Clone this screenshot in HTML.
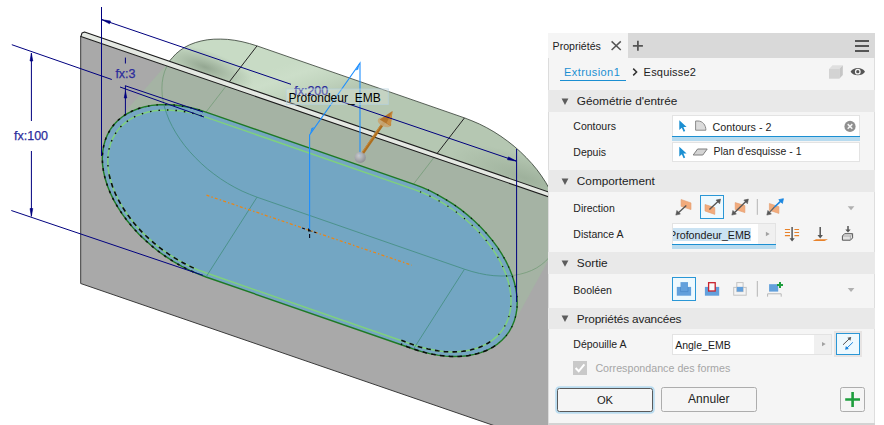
<!DOCTYPE html>
<html lang="fr">
<head>
<meta charset="utf-8">
<title>Propriétés - Extrusion1</title>
<style>
html,body{margin:0;padding:0;background:#fff;}
body{width:884px;height:425px;position:relative;overflow:hidden;font-family:"Liberation Sans",sans-serif;color:#222;}
#scene{position:absolute;left:0;top:0;width:884px;height:425px;}
#scene text{font-family:"Liberation Sans",sans-serif;}
#panel{position:absolute;left:548px;top:33px;width:327px;height:389.8px;background:#f5f5f5;}
#panel .bl{position:absolute;left:0;top:0;width:1px;height:390px;background:#dcdcdc;}
#panel .br{position:absolute;left:326px;top:25px;width:1px;height:365px;background:#dedede;}
#below{position:absolute;left:548px;top:422.6px;width:327px;height:2.4px;background:#d3d3d3;}
.abs{position:absolute;white-space:nowrap;line-height:1;}
.tabbar{position:absolute;left:0;top:0;width:327px;height:24.6px;background:#d9d9d9;}
.tab{position:absolute;left:0;top:0;width:80px;height:25px;background:#f5f5f5;}
.hdr{position:absolute;left:0;width:327px;height:21px;background:#e9e9e9;}
.hdr span{position:absolute;left:28.8px;top:5.1px;font-size:11.8px;line-height:1;color:#222;white-space:nowrap;}
.lbl{position:absolute;left:25.3px;font-size:10.5px;line-height:1;color:#222;white-space:nowrap;}
.inp{position:absolute;background:#fff;box-sizing:border-box;border:1px solid #e3e3e3;}
.uline{position:absolute;height:1.2px;background:#1b8fd2;}
.band{position:absolute;background:#b8dbef;}
.sel{position:absolute;box-sizing:border-box;border:1px solid #2a97d6;background:#eef9fe;}
.btn{position:absolute;box-sizing:border-box;border:1px solid #adadad;border-radius:2.5px;background:#f5f5f5;font-size:12px;line-height:22px;text-align:center;color:#222;}
#icons{position:absolute;left:0;top:0;width:327px;height:389px;overflow:visible;}
</style>
</head>
<body>
<svg id="scene" viewBox="0 0 884 425">
<defs>
  <clipPath id="slotClip"><path d="M413.5 184.1 L421.6 187.2 L429.7 190.7 L437.7 194.8 L445.5 199.3 L453.2 204.2 L460.6 209.4 L467.7 215.1 L474.4 221.0 L480.8 227.2 L486.8 233.7 L492.3 240.4 L497.4 247.2 L501.9 254.2 L505.9 261.2 L509.3 268.3 L512.1 275.3 L514.3 282.3 L515.9 289.2 L516.9 296.0 L517.2 302.6 L516.9 308.9 L515.9 315.0 L514.3 320.8 L512.1 326.3 L509.3 331.4 L505.9 336.1 L501.9 340.3 L497.4 344.1 L492.3 347.5 L486.8 350.3 L480.8 352.6 L474.4 354.4 L467.7 355.7 L460.6 356.4 L453.2 356.5 L445.5 356.1 L437.7 355.1 L429.7 353.6 L421.6 351.6 L413.5 349.0 L206.0 277.0 L197.9 273.9 L189.8 270.4 L181.8 266.3 L174.0 261.8 L166.3 256.9 L158.9 251.7 L151.8 246.0 L145.1 240.1 L138.7 233.9 L132.7 227.4 L127.2 220.7 L122.1 213.9 L117.6 206.9 L113.6 199.9 L110.2 192.8 L107.4 185.8 L105.2 178.8 L103.6 171.9 L102.6 165.1 L102.3 158.6 L102.6 152.2 L103.6 146.1 L105.2 140.3 L107.4 134.8 L110.2 129.7 L113.6 125.0 L117.6 120.8 L122.1 117.0 L127.2 113.6 L132.7 110.8 L138.7 108.5 L145.1 106.7 L151.8 105.4 L158.9 104.7 L166.3 104.6 L174.0 105.0 L181.8 106.0 L189.8 107.5 L197.9 109.5 L206.0 112.1 Z"/></clipPath>
  <clipPath id="plateClip"><polygon points="80.7,36.5 600,214.4 600,462 80.7,283.5"/></clipPath>
  <clipPath id="aboveStrip"><polygon points="0,0 600,0 600,209.7 84,31.8 0,2.8"/></clipPath>
  <linearGradient id="gbody" gradientUnits="userSpaceOnUse" x1="300" y1="106" x2="285.7" y2="64">
    <stop offset="0" stop-color="#b5c7b2"/>
    <stop offset="0.35" stop-color="#c2d5bf"/>
    <stop offset="0.7" stop-color="#ccdec9"/>
    <stop offset="1" stop-color="#c8dbc5"/>
  </linearGradient>
  <radialGradient id="gend" gradientUnits="userSpaceOnUse" cx="525" cy="178" r="30" gradientTransform="translate(525 178) rotate(19) scale(2.6 0.75) translate(-525 -178)">
    <stop offset="0" stop-color="#8fa28d" stop-opacity="0.6"/>
    <stop offset="1" stop-color="#8fa28d" stop-opacity="0"/>
  </radialGradient>
  <radialGradient id="gshadow" gradientUnits="userSpaceOnUse" cx="205" cy="67" r="30" gradientTransform="translate(205 67) rotate(19) scale(1.7 0.55) translate(-205 -67)">
    <stop offset="0" stop-color="#879a85" stop-opacity="0.8"/>
    <stop offset="1" stop-color="#8fa28d" stop-opacity="0"/>
  </radialGradient>
  <radialGradient id="ball" cx="0.4" cy="0.35" r="0.7">
    <stop offset="0" stop-color="#cfcfd4"/>
    <stop offset="1" stop-color="#85858e"/>
  </radialGradient>
</defs>
<!-- extruded body seen behind the plate -->
<g clip-path="url(#aboveStrip)">
  <path d="M102.3 158.6 L102.6 152.2 L103.6 146.1 L105.2 140.3 L107.4 134.8 L110.2 129.7 L113.6 125.0 L172.3 57.8 L175.9 53.9 L180.1 50.4 L184.7 47.3 L189.8 44.7 L195.3 42.6 L201.1 41.0 L207.3 39.8 L213.8 39.2 L220.6 39.1 L227.6 39.4 L234.8 40.3 L242.1 41.7 L249.6 43.6 L257.0 45.9 L464.5 117.9 L471.9 120.8 L479.4 124.0 L486.7 127.7 L493.9 131.8 L500.9 136.3 L507.7 141.2 L514.2 146.3 L520.4 151.8 L526.2 157.5 L531.7 163.4 L536.8 169.5 L541.4 175.8 L545.6 182.2 L549.2 188.6 L552.4 195.1 L554.9 201.6 L557.0 208.0 L558.4 214.3 L559.3 220.5 L559.6 226.6 L559.3 232.4 L558.4 238.0 L557.0 243.3 L554.9 248.3 L512.1 326.3 L509.3 331.4 L505.9 336.1 L501.9 340.3 L497.4 344.1 L492.3 347.5 L486.8 350.3 L480.8 352.6 L474.4 354.4 L467.7 355.7 L460.6 356.4 L453.2 356.5 L445.5 356.1 L437.7 355.1 L429.7 353.6 L421.6 351.6 L413.5 349.0 L206.0 277.0 L197.9 273.9 L189.8 270.4 L181.8 266.3 L174.0 261.8 L166.3 256.9 L158.9 251.7 L151.8 246.0 L145.1 240.1 L138.7 233.9 L132.7 227.4 L127.2 220.7 L122.1 213.9 L117.6 206.9 L113.6 199.9 L110.2 192.8 L107.4 185.8 L105.2 178.8 L103.6 171.9 L102.6 165.1 Z" fill="url(#gbody)"/>
  <path d="M102.3 158.6 L102.6 152.2 L103.6 146.1 L105.2 140.3 L107.4 134.8 L110.2 129.7 L113.6 125.0 L172.3 57.8 L175.9 53.9 L180.1 50.4 L184.7 47.3 L189.8 44.7 L195.3 42.6 L201.1 41.0 L207.3 39.8 L213.8 39.2 L220.6 39.1 L227.6 39.4 L234.8 40.3 L242.1 41.7 L249.6 43.6 L257.0 45.9 L464.5 117.9 L471.9 120.8 L479.4 124.0 L486.7 127.7 L493.9 131.8 L500.9 136.3 L507.7 141.2 L514.2 146.3 L520.4 151.8 L526.2 157.5 L531.7 163.4 L536.8 169.5 L541.4 175.8 L545.6 182.2 L549.2 188.6 L552.4 195.1 L554.9 201.6 L557.0 208.0 L558.4 214.3 L559.3 220.5 L559.6 226.6 L559.3 232.4 L558.4 238.0 L557.0 243.3 L554.9 248.3 L512.1 326.3 L509.3 331.4 L505.9 336.1 L501.9 340.3 L497.4 344.1 L492.3 347.5 L486.8 350.3 L480.8 352.6 L474.4 354.4 L467.7 355.7 L460.6 356.4 L453.2 356.5 L445.5 356.1 L437.7 355.1 L429.7 353.6 L421.6 351.6 L413.5 349.0 L206.0 277.0 L197.9 273.9 L189.8 270.4 L181.8 266.3 L174.0 261.8 L166.3 256.9 L158.9 251.7 L151.8 246.0 L145.1 240.1 L138.7 233.9 L132.7 227.4 L127.2 220.7 L122.1 213.9 L117.6 206.9 L113.6 199.9 L110.2 192.8 L107.4 185.8 L105.2 178.8 L103.6 171.9 L102.6 165.1 Z" fill="url(#gend)"/>
  <path d="M102.3 158.6 L102.6 152.2 L103.6 146.1 L105.2 140.3 L107.4 134.8 L110.2 129.7 L113.6 125.0 L172.3 57.8 L175.9 53.9 L180.1 50.4 L184.7 47.3 L189.8 44.7 L195.3 42.6 L201.1 41.0 L207.3 39.8 L213.8 39.2 L220.6 39.1 L227.6 39.4 L234.8 40.3 L242.1 41.7 L249.6 43.6 L257.0 45.9 L464.5 117.9 L471.9 120.8 L479.4 124.0 L486.7 127.7 L493.9 131.8 L500.9 136.3 L507.7 141.2 L514.2 146.3 L520.4 151.8 L526.2 157.5 L531.7 163.4 L536.8 169.5 L541.4 175.8 L545.6 182.2 L549.2 188.6 L552.4 195.1 L554.9 201.6 L557.0 208.0 L558.4 214.3 L559.3 220.5 L559.6 226.6 L559.3 232.4 L558.4 238.0 L557.0 243.3 L554.9 248.3 L512.1 326.3 L509.3 331.4 L505.9 336.1 L501.9 340.3 L497.4 344.1 L492.3 347.5 L486.8 350.3 L480.8 352.6 L474.4 354.4 L467.7 355.7 L460.6 356.4 L453.2 356.5 L445.5 356.1 L437.7 355.1 L429.7 353.6 L421.6 351.6 L413.5 349.0 L206.0 277.0 L197.9 273.9 L189.8 270.4 L181.8 266.3 L174.0 261.8 L166.3 256.9 L158.9 251.7 L151.8 246.0 L145.1 240.1 L138.7 233.9 L132.7 227.4 L127.2 220.7 L122.1 213.9 L117.6 206.9 L113.6 199.9 L110.2 192.8 L107.4 185.8 L105.2 178.8 L103.6 171.9 L102.6 165.1 Z" fill="url(#gshadow)"/>
  <path d="M102.3 158.6 L102.6 152.2 L103.6 146.1 L105.2 140.3 L107.4 134.8 L110.2 129.7 L113.6 125.0 L172.3 57.8 L175.9 53.9 L180.1 50.4 L184.7 47.3 L189.8 44.7 L195.3 42.6 L201.1 41.0 L207.3 39.8 L213.8 39.2 L220.6 39.1 L227.6 39.4 L234.8 40.3 L242.1 41.7 L249.6 43.6 L257.0 45.9 L464.5 117.9 L471.9 120.8 L479.4 124.0 L486.7 127.7 L493.9 131.8 L500.9 136.3 L507.7 141.2 L514.2 146.3 L520.4 151.8 L526.2 157.5 L531.7 163.4 L536.8 169.5 L541.4 175.8 L545.6 182.2 L549.2 188.6 L552.4 195.1 L554.9 201.6 L557.0 208.0 L558.4 214.3 L559.3 220.5 L559.6 226.6 L559.3 232.4 L558.4 238.0 L557.0 243.3 L554.9 248.3 L512.1 326.3 L509.3 331.4 L505.9 336.1 L501.9 340.3 L497.4 344.1 L492.3 347.5 L486.8 350.3 L480.8 352.6 L474.4 354.4 L467.7 355.7 L460.6 356.4 L453.2 356.5 L445.5 356.1 L437.7 355.1 L429.7 353.6 L421.6 351.6 L413.5 349.0 L206.0 277.0 L197.9 273.9 L189.8 270.4 L181.8 266.3 L174.0 261.8 L166.3 256.9 L158.9 251.7 L151.8 246.0 L145.1 240.1 L138.7 233.9 L132.7 227.4 L127.2 220.7 L122.1 213.9 L117.6 206.9 L113.6 199.9 L110.2 192.8 L107.4 185.8 L105.2 178.8 L103.6 171.9 L102.6 165.1 Z" fill="none" stroke="#3c463c" stroke-width="0.85"/>
  <path d="M257.0 45.9 L206.0 112.1" stroke="#222" stroke-width="1" fill="none"/>
  <path d="M464.5 117.9 L413.5 184.1" stroke="#222" stroke-width="1" fill="none"/>
</g>
<!-- plate front face -->
<polygon points="80.7,36.5 600,214.4 600,462 80.7,283.5" fill="#a9a9a9"/>
<g clip-path="url(#plateClip)">
  <path d="M102.3 158.6 L102.6 152.2 L103.6 146.1 L105.2 140.3 L107.4 134.8 L110.2 129.7 L113.6 125.0 L172.3 57.8 L175.9 53.9 L180.1 50.4 L184.7 47.3 L189.8 44.7 L195.3 42.6 L201.1 41.0 L207.3 39.8 L213.8 39.2 L220.6 39.1 L227.6 39.4 L234.8 40.3 L242.1 41.7 L249.6 43.6 L257.0 45.9 L464.5 117.9 L471.9 120.8 L479.4 124.0 L486.7 127.7 L493.9 131.8 L500.9 136.3 L507.7 141.2 L514.2 146.3 L520.4 151.8 L526.2 157.5 L531.7 163.4 L536.8 169.5 L541.4 175.8 L545.6 182.2 L549.2 188.6 L552.4 195.1 L554.9 201.6 L557.0 208.0 L558.4 214.3 L559.3 220.5 L559.6 226.6 L559.3 232.4 L558.4 238.0 L557.0 243.3 L554.9 248.3 L512.1 326.3 L509.3 331.4 L505.9 336.1 L501.9 340.3 L497.4 344.1 L492.3 347.5 L486.8 350.3 L480.8 352.6 L474.4 354.4 L467.7 355.7 L460.6 356.4 L453.2 356.5 L445.5 356.1 L437.7 355.1 L429.7 353.6 L421.6 351.6 L413.5 349.0 L206.0 277.0 L197.9 273.9 L189.8 270.4 L181.8 266.3 L174.0 261.8 L166.3 256.9 L158.9 251.7 L151.8 246.0 L145.1 240.1 L138.7 233.9 L132.7 227.4 L127.2 220.7 L122.1 213.9 L117.6 206.9 L113.6 199.9 L110.2 192.8 L107.4 185.8 L105.2 178.8 L103.6 171.9 L102.6 165.1 Z" fill="#a5b3a4"/>
  <path d="M257.0 45.9 L206.0 112.1" stroke="#6f9a72" stroke-width="0.7" fill="none"/>
  <path d="M464.5 117.9 L413.5 184.1" stroke="#6f9a72" stroke-width="0.7" fill="none"/>
  <path d="M464.5 117.9 L471.9 120.8 L479.4 124.0 L486.7 127.7 L493.9 131.8 L500.9 136.3 L507.7 141.2 L514.2 146.3 L520.4 151.8 L526.2 157.5 L531.7 163.4 L536.8 169.5 L541.4 175.8 L545.6 182.2 L549.2 188.6 L552.4 195.1 L554.9 201.6 L557.0 208.0 L558.4 214.3 L559.3 220.5 L559.6 226.6 L559.3 232.4 L558.4 238.0 L557.0 243.3 L554.9 248.3 L552.4 253.0 L549.2 257.3 L545.6 261.2 L541.4 264.7 L536.8 267.8 L531.7 270.4 L526.2 272.5 L520.4 274.1 L514.2 275.3 L507.7 275.9 L500.9 276.0 L493.9 275.7 L486.7 274.8 L479.4 273.4 L471.9 271.5 L464.5 269.2 L257.0 197.2 L249.6 194.3 L242.1 191.1 L234.8 187.4 L227.6 183.3 L220.6 178.8 L213.8 173.9 L207.3 168.8 L201.1 163.3 L195.3 157.6 L189.8 151.7 L184.7 145.6 L180.1 139.3 L175.9 132.9 L172.3 126.5 L169.1 120.0 L166.6 113.5 L164.5 107.1 L163.1 100.8 L162.2 94.6 L161.9 88.5 L162.2 82.7 L163.1 77.1 L164.5 71.8 L166.6 66.8 L169.1 62.1 L172.3 57.8 L175.9 53.9 L180.1 50.4 L184.7 47.3 L189.8 44.7 L195.3 42.6 L201.1 41.0 L207.3 39.8 L213.8 39.2 L220.6 39.1 L227.6 39.4 L234.8 40.3 L242.1 41.7 L249.6 43.6 L257.0 45.9 Z" fill="none" stroke="#6f9a72" stroke-width="0.7"/>
</g>
<polyline points="80.7,36 80.7,283.5 600,462" fill="none" stroke="#3a3a3a" stroke-width="1"/>
<!-- plate top strip -->
<polygon points="80.9,36.5 82,33 84.5,32 600,209.7 600,214.4" fill="#e4e8e2" stroke="#1c1c1c" stroke-width="1.05" stroke-linejoin="round"/>
<!-- sketch profile -->
<path d="M413.5 184.1 L421.6 187.2 L429.7 190.7 L437.7 194.8 L445.5 199.3 L453.2 204.2 L460.6 209.4 L467.7 215.1 L474.4 221.0 L480.8 227.2 L486.8 233.7 L492.3 240.4 L497.4 247.2 L501.9 254.2 L505.9 261.2 L509.3 268.3 L512.1 275.3 L514.3 282.3 L515.9 289.2 L516.9 296.0 L517.2 302.6 L516.9 308.9 L515.9 315.0 L514.3 320.8 L512.1 326.3 L509.3 331.4 L505.9 336.1 L501.9 340.3 L497.4 344.1 L492.3 347.5 L486.8 350.3 L480.8 352.6 L474.4 354.4 L467.7 355.7 L460.6 356.4 L453.2 356.5 L445.5 356.1 L437.7 355.1 L429.7 353.6 L421.6 351.6 L413.5 349.0 L206.0 277.0 L197.9 273.9 L189.8 270.4 L181.8 266.3 L174.0 261.8 L166.3 256.9 L158.9 251.7 L151.8 246.0 L145.1 240.1 L138.7 233.9 L132.7 227.4 L127.2 220.7 L122.1 213.9 L117.6 206.9 L113.6 199.9 L110.2 192.8 L107.4 185.8 L105.2 178.8 L103.6 171.9 L102.6 165.1 L102.3 158.6 L102.6 152.2 L103.6 146.1 L105.2 140.3 L107.4 134.8 L110.2 129.7 L113.6 125.0 L117.6 120.8 L122.1 117.0 L127.2 113.6 L132.7 110.8 L138.7 108.5 L145.1 106.7 L151.8 105.4 L158.9 104.7 L166.3 104.6 L174.0 105.0 L181.8 106.0 L189.8 107.5 L197.9 109.5 L206.0 112.1 Z" fill="#76a6c2" stroke="#1f7a25" stroke-width="1.4"/>
<path d="M413.2 189.1 L420.9 192.0 L428.5 195.4 L436.0 199.2 L443.4 203.4 L450.6 208.0 L457.6 213.0 L464.3 218.3 L470.7 224.0 L476.8 229.8 L482.4 235.9 L487.6 242.2 L492.4 248.7 L496.7 255.3 L500.4 261.9 L503.6 268.6 L506.3 275.2 L508.4 281.8 L509.9 288.3 L510.8 294.7 L511.1 300.9 L510.8 306.9 L509.9 312.7 L508.4 318.2 L506.3 323.3 L503.6 328.1 L500.4 332.6 L496.7 336.6 L492.4 340.2 L487.6 343.3 L482.4 346.0 L476.8 348.2 L470.7 349.9 L464.3 351.1 L457.6 351.7 L450.6 351.9 L443.4 351.5 L436.0 350.6 L428.5 349.1 L420.9 347.2 L413.2 344.8 L205.7 272.8 L198.0 269.9 L190.4 266.5 L182.9 262.7 L175.5 258.5 L168.3 253.9 L161.3 248.9 L154.6 243.6 L148.2 237.9 L142.1 232.1 L136.5 226.0 L131.3 219.7 L126.5 213.2 L122.2 206.6 L118.5 200.0 L115.3 193.3 L112.6 186.7 L110.5 180.1 L109.0 173.6 L108.1 167.2 L107.8 161.0 L108.1 155.0 L109.0 149.2 L110.5 143.7 L112.6 138.6 L115.3 133.8 L118.5 129.3 L122.2 125.3 L126.5 121.7 L131.3 118.6 L136.5 115.9 L142.1 113.7 L148.2 112.0 L154.6 110.8 L161.3 110.2 L168.3 110.0 L175.5 110.4 L182.9 111.3 L190.4 112.8 L198.0 114.7 L205.7 117.1 Z" fill="#74a6c3" stroke="#7fd07f" stroke-width="1.5"/>
<g clip-path="url(#slotClip)" fill="none" stroke="#3f8c7c" stroke-width="0.9" opacity="0.85">
  <path d="M464.5 117.9 L471.9 120.8 L479.4 124.0 L486.7 127.7 L493.9 131.8 L500.9 136.3 L507.7 141.2 L514.2 146.3 L520.4 151.8 L526.2 157.5 L531.7 163.4 L536.8 169.5 L541.4 175.8 L545.6 182.2 L549.2 188.6 L552.4 195.1 L554.9 201.6 L557.0 208.0 L558.4 214.3 L559.3 220.5 L559.6 226.6 L559.3 232.4 L558.4 238.0 L557.0 243.3 L554.9 248.3 L552.4 253.0 L549.2 257.3 L545.6 261.2 L541.4 264.7 L536.8 267.8 L531.7 270.4 L526.2 272.5 L520.4 274.1 L514.2 275.3 L507.7 275.9 L500.9 276.0 L493.9 275.7 L486.7 274.8 L479.4 273.4 L471.9 271.5 L464.5 269.2 L257.0 197.2 L249.6 194.3 L242.1 191.1 L234.8 187.4 L227.6 183.3 L220.6 178.8 L213.8 173.9 L207.3 168.8 L201.1 163.3 L195.3 157.6 L189.8 151.7 L184.7 145.6 L180.1 139.3 L175.9 132.9 L172.3 126.5 L169.1 120.0 L166.6 113.5 L164.5 107.1 L163.1 100.8 L162.2 94.6 L161.9 88.5 L162.2 82.7 L163.1 77.1 L164.5 71.8 L166.6 66.8 L169.1 62.1 L172.3 57.8 L175.9 53.9 L180.1 50.4 L184.7 47.3 L189.8 44.7 L195.3 42.6 L201.1 41.0 L207.3 39.8 L213.8 39.2 L220.6 39.1 L227.6 39.4 L234.8 40.3 L242.1 41.7 L249.6 43.6 L257.0 45.9 Z"/>
  <path d="M257.0 197.2 L206.0 277.0"/>
  <path d="M464.5 269.2 L413.5 349.0"/>
</g>
<g fill="none" stroke="#0c0c0c" stroke-width="1.5" stroke-dasharray="2.6 5.2">
  <path d="M193.4 272.0 L185.3 268.2 L177.4 263.9 L169.7 259.2 L162.2 254.1 L154.9 248.6 L148.0 242.8 L141.5 236.7 L135.3 230.3 L129.6 223.7 L124.3 216.9 L119.5 210.0 L115.3 203.0 L111.6 196.0 L108.6 188.9 L106.1 181.9 L104.2 174.9 L103.0 168.1 L102.4 161.4 L102.4 155.0 L103.1 148.8 L104.4 142.8 L106.3 137.2 L108.9 132.0 L112.0 127.1 L115.7 122.6 L120.0 118.6 L124.8 115.0 L130.2 112.0 L135.9 109.4 L142.2 107.4"/>
</g>
<g fill="none" stroke="#0c0c0c" stroke-width="1.6" stroke-dasharray="4.8 4.2">
  <path d="M193.8 268.1 L189.6 266.1 L185.4 264.0 L181.2 261.8 L177.1 259.4 L173.0 257.0 L169.0 254.4 L165.1 251.7 L161.3 248.9 L157.5 246.0 L153.8 242.9 L150.3 239.8 L146.8 236.7 L143.4 233.4 L140.2 230.1 L137.1 226.6 L134.1 223.2 L131.3 219.7 L128.6 216.1 L126.0 212.5 L123.6 208.8 L121.4 205.2 L119.3 201.5 L117.3 197.8 L115.6 194.1 L114.0 190.4 L112.6 186.7 L111.4 183.0 L110.3 179.3 L109.4 175.7 L108.8 172.1"/>
</g>
<g fill="none" stroke="#0c0c0c" stroke-width="1.6" stroke-dasharray="4.6 4.2">
  <path d="M495.2 345.7 L493.0 347.1 L490.6 348.4 L488.2 349.7 L485.7 350.8 L483.1 351.8 L480.4 352.8 L477.7 353.6 L474.8 354.3 L471.9 354.9 L469.0 355.5 L465.9 355.9 L462.8 356.2 L459.6 356.4 L456.4 356.5 L453.2 356.5 L449.9 356.4 L446.5 356.2 L443.1 355.8 L439.7 355.4 L436.2 354.9 L432.7 354.3 L429.2 353.5 L425.7 352.7 L422.2 351.7 L418.6 350.7 L415.0 349.5 L411.5 348.3 L407.9 347.0 L404.4 345.5 L400.8 344.0"/>
  <path d="M490.3 341.6 L488.2 343.0 L486.0 344.2 L483.7 345.4 L481.4 346.5 L478.9 347.5 L476.4 348.3 L473.8 349.1 L471.1 349.8 L468.4 350.4 L465.5 350.9 L462.7 351.3 L459.7 351.6 L456.8 351.8 L453.7 351.9 L450.6 351.9 L447.5 351.8 L444.4 351.6 L441.1 351.2 L437.9 350.8 L434.6 350.3 L431.4 349.7 L428.0 349.0 L424.7 348.2 L421.4 347.4 L418.0 346.4 L414.7 345.3 L411.3 344.1 L407.9 342.9 L404.6 341.5 L401.2 340.1"/>
</g>
<g fill="none" stroke="#0c0c0c" stroke-width="1.4" stroke-dasharray="1.5 7">
  <path d="M108.0 166.5 L107.8 162.2 L107.9 158.1 L108.2 154.1 L108.8 150.1 L109.7 146.3 L110.9 142.7 L112.3 139.2 L114.0 135.8 L116.0 132.6 L118.2 129.6 L120.7 126.8 L123.4 124.2 L126.4 121.8 L129.6 119.6 L133.0 117.6 L136.6 115.8 L140.4 114.3 L144.4 113.0 L148.5 111.9 L152.9 111.1 L157.4 110.5 L162.0 110.1 L166.7 110.0 L171.6 110.2 L176.6 110.5 L181.6 111.1 L186.7 112.0 L191.9 113.1 L197.1 114.4 L202.3 116.0"/>
  <path d="M148.0 106.1 L149.7 105.8 L151.5 105.5 L153.2 105.3 L155.0 105.1 L156.8 104.9 L158.6 104.8 L160.4 104.7 L162.3 104.6 L164.2 104.6 L166.1 104.6 L168.0 104.6 L169.9 104.7 L171.8 104.8 L173.7 105.0 L175.7 105.2 L177.7 105.4 L179.6 105.7 L181.6 105.9 L183.6 106.3 L185.6 106.6 L187.7 107.0 L189.7 107.5 L191.7 107.9 L193.7 108.4 L195.8 108.9 L197.8 109.5 L199.9 110.1 L201.9 110.7 L204.0 111.4 L206.0 112.1"/>
</g>
<g fill="none" stroke="#0c0c0c" stroke-width="1.2" stroke-dasharray="1.3 9">
  <path d="M427.9 189.9 L434.8 193.3 L441.6 197.0 L448.3 201.0 L454.8 205.3 L461.1 209.8 L467.2 214.7 L473.1 219.7 L478.7 225.0 L484.0 230.5 L488.9 236.2 L493.6 241.9 L497.8 247.8 L501.7 253.8 L505.2 259.8 L508.2 265.9 L510.9 272.0 L513.0 278.0 L514.8 284.0 L516.1 289.9 L516.9 295.7 L517.2 301.4 L517.1 306.9 L516.4 312.2 L515.4 317.4 L513.8 322.3 L511.8 326.9 L509.4 331.3 L506.5 335.3 L503.2 339.1 L499.5 342.5"/>
  <path d="M420.0 191.7 L426.8 194.6 L433.5 197.9 L440.2 201.5 L446.7 205.4 L453.0 209.7 L459.1 214.2 L465.1 219.0 L470.7 224.0 L476.1 229.2 L481.2 234.6 L485.9 240.1 L490.3 245.8 L494.4 251.6 L498.0 257.5 L501.2 263.4 L504.0 269.3 L506.3 275.2 L508.2 281.1 L509.6 286.9 L510.6 292.6 L511.0 298.2 L511.0 303.6 L510.6 308.9 L509.6 313.9 L508.2 318.8 L506.3 323.3 L504.0 327.6 L501.2 331.6 L498.0 335.3 L494.4 338.6"/>
</g>
<!-- centre line -->
<line x1="206.5" y1="195.2" x2="411.8" y2="265.2" stroke="#e8861a" stroke-width="1.3" stroke-dasharray="3 2.2 1.4 2.2"/>
<!-- sketch plane indicator -->
<g stroke="#1e8fff" stroke-width="1.1" fill="none">
  <polyline points="309.6,230 309.6,135 360,63 360,157"/>
</g>
<polygon points="359.6,63 355.6,70.6 358.2,69.4" fill="#1e8fff"/>
<polygon points="310,134.6 314,127 311.4,128.2" fill="#1e8fff"/>
<path d="M302.1 228 L305 229 M314 232 L316.4 232.8 M309.6 234 V238" stroke="#0a0a1a" stroke-width="1.1" fill="none"/>
<polygon points="308,228 311.8,231.6 308,231.6" fill="#111"/>
<!-- manipulator -->
<line x1="362.4" y1="153.8" x2="384.4" y2="121.6" stroke="#ad6e1e" stroke-width="2.9"/>
<line x1="361.7" y1="153" x2="383.7" y2="121" stroke="#c98c3e" stroke-width="0.9"/>
<ellipse cx="384.6" cy="122.4" rx="7.3" ry="4.2" fill="#c7a572" fill-opacity="0.9" transform="rotate(24 384.6 122.4)"/>
<polygon points="392.5,111 379.6,119.4 390.6,126" fill="#b4752a"/>
<polygon points="392.5,111 386.6,123 390.6,126" fill="#c98e42"/>
<circle cx="360.2" cy="157.4" r="5.6" fill="url(#ball)" fill-opacity="0.85"/>
<!-- dimensions -->
<g stroke="#00007f" stroke-width="1" fill="none">
  <line x1="101.5" y1="7" x2="101.5" y2="156"/>
  <line x1="101.5" y1="19.5" x2="291" y2="84.3"/>
  <line x1="338" y1="100.4" x2="516" y2="161"/>
  <line x1="516.6" y1="149" x2="516.6" y2="302"/>
  <line x1="11.8" y1="44.7" x2="111.8" y2="79.5"/>
  <line x1="11.3" y1="210.5" x2="203" y2="275.3"/>
  <line x1="31.4" y1="53" x2="31.4" y2="121"/>
  <line x1="31.4" y1="151" x2="31.4" y2="216.5"/>
  <line x1="125.4" y1="57.6" x2="125.4" y2="63.5"/>
  <line x1="125.4" y1="85.5" x2="125.4" y2="114"/>
  <line x1="125.4" y1="85.8" x2="203" y2="112"/>
  <line x1="120" y1="87" x2="204" y2="117"/>
</g>
<g fill="#00007f" stroke="#00007f" stroke-width="0.6">
  <polygon points="102,19.7 110.5,21 109.5,23.8"/>
  <polygon points="516,161 507.5,159.7 508.5,156.9"/>
  <polygon points="31.4,53.5 30,61 32.8,61"/>
  <polygon points="31.4,216 30,208.5 32.8,208.5"/>
  <polygon points="125.5,91.5 124.2,98 126.8,98"/>
</g>
<g fill="#2c2c9c" stroke="#2c2c9c" stroke-width="0.25" font-size="12.5px">
  <text x="115.4" y="78.1">fx:3</text>
  <text x="14" y="140.4">fx:100</text>
  <text x="294.2" y="95.3">fx:200</text>
</g>
<!-- value label -->
<rect x="286.3" y="89" width="102" height="15.4" fill="#f2f8f2" fill-opacity="0.26" stroke="#b4d2e0" stroke-opacity="0.75" stroke-width="0.9"/>
<text x="288.6" y="101.7" font-size="12px" fill="#000">Profondeur_EMB</text>
</svg>

<div id="below"></div>
<div id="panel">
  <div class="bl"></div><div class="br"></div>
  <div class="tabbar"><div class="tab"></div></div>
  <div class="abs" style="left:4.6px;top:7.7px;font-size:10.6px;color:#222;">Propriétés</div>

  <!-- breadcrumb -->
  <div class="abs" style="left:16px;top:33.8px;font-size:11px;letter-spacing:0.42px;color:#1b8fd2;">Extrusion1</div>
  <div class="uline" style="left:12px;top:47px;width:66px;height:1.2px"></div>
  <div class="abs" style="left:95.6px;top:33.7px;font-size:11px;letter-spacing:0.2px;color:#222;">Esquisse2</div>

  <!-- Géométrie d'entrée -->
  <div class="hdr" style="top:57px;height:21.5px"><span style="top:6.1px">Géométrie d'entrée</span></div>
  <div class="lbl" style="top:88.4px">Contours</div>
  <div class="inp" style="left:124.4px;top:82.4px;width:187.2px;height:21px;border-bottom:none;"></div>
  <div class="uline" style="left:124.4px;top:102.9px;width:187.2px;"></div>
  <div class="band" style="left:124.4px;top:104.1px;width:187.2px;height:4.2px;"></div>
  <div class="abs" style="left:164.6px;top:89px;font-size:10.7px;">Contours - 2</div>

  <div class="lbl" style="top:114px">Depuis</div>
  <div class="inp" style="left:124.4px;top:109px;width:187.2px;height:20.4px;"></div>
  <div class="abs" style="left:165.6px;top:114.2px;font-size:10.45px;">Plan d'esquisse - 1</div>

  <!-- Comportement -->
  <div class="hdr" style="top:137px;height:21.5px"><span style="top:6.1px">Comportement</span></div>
  <div class="lbl" style="top:169.6px">Direction</div>
  <div class="sel" style="left:152px;top:162px;width:24px;height:23.6px;"></div>

  <div class="lbl" style="top:195.6px">Distance A</div>
  <div class="inp" style="left:124.4px;top:189.8px;width:103.6px;height:21.8px;border-bottom:none;overflow:hidden;">
    <div class="abs" style="left:0;top:4.4px;width:78px;height:12.5px;background:#cbe3f3;"></div>
    <div class="abs" style="left:-4.4px;top:5.8px;font-size:10.7px;color:#1a1a1a;">Profondeur_EMB</div>
    <div class="abs" style="left:84.6px;top:0;width:18px;height:22px;background:#f0f0f0;"></div>
  </div>
  <div class="uline" style="left:124.4px;top:211.1px;width:103.6px;"></div>
  <div class="band" style="left:124.4px;top:212.3px;width:103.6px;height:3.5px;"></div>

  <!-- Sortie -->
  <div class="hdr" style="top:219px;height:21.5px"><span style="top:5.7px">Sortie</span></div>
  <div class="lbl" style="top:252.2px">Booléen</div>
  <div class="sel" style="left:124px;top:244px;width:24.2px;height:23.8px;"></div>

  <!-- Propriétés avancées -->
  <div class="hdr" style="top:274.7px;height:21.8px"><span style="top:6.3px;letter-spacing:-0.16px">Propriétés avancées</span></div>
  <div class="lbl" style="top:306.2px">Dépouille A</div>
  <div class="inp" style="left:124.4px;top:300.6px;width:159.4px;height:21px;overflow:hidden;">
    <div class="abs" style="left:1.8px;top:5.3px;font-size:10.5px;color:#1a1a1a;">Angle_EMB</div>
    <div class="abs" style="left:140.6px;top:0;width:18px;height:21px;background:#f0f0f0;"></div>
  </div>
  <div class="abs" style="left:286.3px;top:298.2px;width:27.5px;height:25.5px;background:#e7e4e3;"></div>
  <div class="sel" style="left:287.9px;top:299.9px;width:24.1px;height:22.2px;border-width:1.3px;"></div>

  <div class="abs" style="left:25px;top:328px;width:14px;height:14px;background:#c9c9c9;"></div>
  <div class="abs" style="left:47.4px;top:329.6px;font-size:10.7px;color:#a6a6a6;">Correspondance des formes</div>

  <div class="btn" style="left:9.2px;top:354.5px;width:95.6px;height:24px;border-color:#5a5a5a;box-shadow:0 0 0 1.8px #b9dcf0;line-height:22px;font-size:11.2px;">OK</div>
  <div class="btn" style="left:113px;top:354.4px;width:95.6px;height:24.4px;">Annuler</div>
  <div class="btn" style="left:292.4px;top:354.4px;width:24.4px;height:24.4px;"></div>

  <svg id="icons" viewBox="548 33 327 389">
    <!-- tab bar icons -->
    <path d="M611.6 41.4 L620.8 50 M620.8 41.4 L611.6 50" stroke="#555" stroke-width="1.5" fill="none"/>
    <path d="M632.9 45.8 H642.9 M637.9 40.8 V50.8" stroke="#555" stroke-width="1.8" fill="none"/>
    <path d="M855 41 H869 M855 46 H869 M855 51 H869" stroke="#555" stroke-width="2" fill="none"/>
    <!-- breadcrumb icons -->
    <path d="M633.2 68.6 L636.6 72 L633.2 75.4" stroke="#333" stroke-width="1.5" fill="none"/>
    <polygon points="829,69 832.5,65.3 842.8,65.3 839.3,69" fill="#dfdfdf"/>
    <polygon points="839.3,69 842.8,65.3 842.8,75 839.3,78.7" fill="#c6c6c6"/>
    <rect x="829" y="69" width="10.3" height="9.7" fill="#d3d3d3"/>
    <path d="M850.6 71.7 C853.3 66.9 862.3 66.9 865 71.7 C862.3 76.5 853.3 76.5 850.6 71.7 Z" fill="#555"/>
    <circle cx="857.8" cy="71.7" r="2.9" fill="#f5f5f5"/>
    <circle cx="857.8" cy="71.7" r="1.6" fill="#555"/>
    <!-- header triangles -->
    <g fill="#5c5c5c">
      <polygon points="561.6,98.6 568.4,98.6 565,105"/>
      <polygon points="561.6,178.6 568.4,178.6 565,185"/>
      <polygon points="561.6,260.4 568.4,260.4 565,266.8"/>
      <polygon points="561.6,315.6 568.4,315.6 565,322"/>
    </g>
    <!-- selection cursors -->
    <path id="cur" d="M679.3 120.2 V129.9 L681.8 127.7 L683.6 131.7 L685.2 131 L683.4 127.1 L686.6 126.9 Z" fill="#1b8fd2"/>
    <path d="M679.3 146.7 V156.4 L681.8 154.2 L683.6 158.2 L685.2 157.5 L683.4 153.6 L686.6 153.4 Z" fill="#1b8fd2"/>
    <path d="M695.6 130.2 V121 H698 C702.6 121 705.9 125 705.9 130.2 Z" fill="#dcdcdc" stroke="#8a8a8a" stroke-width="1"/>
    <path d="M693.2 155 L697.6 149 H707.2 L702.8 155 Z" fill="#d4d4d4" stroke="#7e7e7e" stroke-width="1"/>
    <circle cx="850" cy="126.4" r="5.6" fill="#8f8f8f"/>
    <path d="M847.7 124.1 L852.3 128.7 M852.3 124.1 L847.7 128.7" stroke="#f5f5f5" stroke-width="1.5"/>
    <!-- direction icons -->
    <g stroke-linejoin="round">
      <polygon points="681.1,199.5 691,202.9 691,209.6 681.1,206.3" fill="#f2ab7c" stroke="#e39a6b" stroke-width="0.6"/>
      <path d="M686.3 205.6 L677.6 213.4" stroke="#555" stroke-width="1.35" fill="none"/>
      <polygon points="675.8,215.1 676.9,210.4 680.4,214.1" fill="#555" stroke="#555" stroke-width="0.5"/>

      <polygon points="705,204.5 714.8,207.6 714.8,214.4 705,211" fill="#f2ab7c" stroke="#e39a6b" stroke-width="0.6"/>
      <path d="M709.4 209.6 L718.8 200.8" stroke="#555" stroke-width="1.35" fill="none"/>
      <polygon points="720.6,199.1 719.6,203.8 716,200.1" fill="#555" stroke="#555" stroke-width="0.5"/>

      <polygon points="735.2,202.6 744.9,205.6 744.9,212.6 735.2,209.4" fill="#f2ab7c" stroke="#e39a6b" stroke-width="0.6"/>
      <path d="M733.6 213.4 L746.6 200.8" stroke="#555" stroke-width="1.35" fill="none"/>
      <polygon points="748.4,199.1 747.4,203.8 743.8,200.1" fill="#555" stroke="#555" stroke-width="0.5"/>
      <polygon points="731.8,215.1 732.9,210.4 736.4,214.1" fill="#555" stroke="#555" stroke-width="0.5"/>

      <path d="M757.3 199 V214.8" stroke="#b4b4b4" stroke-width="1" fill="none"/>

      <polygon points="769.4,203.5 778.9,206.7 778.9,213.4 769.4,210.3" fill="#f2ab7c" stroke="#e39a6b" stroke-width="0.6"/>
      <path d="M774.5 207 L768.6 213.4" stroke="#666" stroke-width="1.35" fill="none"/>
      <polygon points="766.8,215.1 767.9,210.4 771.4,214.1" fill="#555" stroke="#555" stroke-width="0.5"/>
      <path d="M774.5 207 L781.6 200.4" stroke="#1b86e0" stroke-width="1.7" fill="none"/>
      <polygon points="783.4,198.7 782.4,203.4 778.8,199.7" fill="#1b86e0" stroke="#1b86e0" stroke-width="0.8"/>
    </g>
    <polygon points="847.7,206.2 854.4,206.2 851.05,210.2" fill="#b0b0b0"/>
    <!-- distance row -->
    <polygon points="765.9,231.8 769.7,234.05 765.9,236.3" fill="#a2a2a2"/>
    <path d="M784.9 229.5 H790 M784.9 232.5 H790 M784.9 235.6 H790 M794.4 229.5 H799.1 M794.4 232.5 H799.1 M794.4 235.6 H799.1" stroke="#e8822a" stroke-width="1.1" fill="none"/>
    <path d="M792.1 227 V239" stroke="#555" stroke-width="1.5" fill="none"/>
    <polygon points="789.5,238.2 794.7,238.2 792.1,241.6" fill="#555"/>
    <path d="M820.2 227 V236" stroke="#555" stroke-width="1.5" fill="none"/>
    <polygon points="817.5,235.1 822.9,235.1 820.2,238.5" fill="#555"/>
    <polygon points="812.7,240.9 816,239.2 828,239.2 824.5,240.9" fill="#e8822a"/>
    <path d="M848 226.1 V230" stroke="#555" stroke-width="1.5" fill="none"/>
    <polygon points="845.3,229.4 850.7,229.4 848,232.6" fill="#555"/>
    <path d="M842.4 240.2 V236 L844.6 233.7 H852.6 V237.9 L850.4 240.2 Z" fill="#e2e2e2" stroke="#555" stroke-width="1" stroke-linejoin="round"/>
    <path d="M842.4 236 H850.4 V240.2 M850.4 236 L852.6 233.7" fill="none" stroke="#8a8a8a" stroke-width="0.6"/>
    <!-- boolean icons -->
    <rect x="676.8" y="286.9" width="14.3" height="8.8" fill="#62a0dc"/>
    <rect x="680.5" y="282.1" width="7.5" height="9.5" fill="#62a0dc"/>
    <path d="M680.5 287 V291.6 H688 V287" fill="none" stroke="#4c8ccc" stroke-width="0.8"/>
    <rect x="704.9" y="286.9" width="14.3" height="8.8" fill="#62a0dc"/>
    <rect x="708.6" y="282.7" width="6.6" height="8.3" fill="#fafafa" stroke="#c8202c" stroke-width="1.3"/>
    <rect x="733.7" y="287.4" width="12.5" height="7.8" fill="#f4f4f4" stroke="#c4c4c4" stroke-width="1"/>
    <rect x="736.8" y="282.6" width="6.3" height="9" fill="none" stroke="#c4c4c4" stroke-width="1"/>
    <rect x="736.8" y="286.9" width="6.3" height="4.7" fill="#62a0dc"/>
    <path d="M757.3 281 V296.7" stroke="#b4b4b4" stroke-width="1" fill="none"/>
    <rect x="769.1" y="284.2" width="9.1" height="7.4" fill="#62a0dc"/>
    <path d="M767.6 296.7 V293.8 H781.2 V296.7" fill="none" stroke="#b8b8b8" stroke-width="1"/>
    <path d="M777 285.1 H783 M780 282.1 V288.1" stroke="#1e9e3e" stroke-width="2" fill="none"/>
    <polygon points="847.7,288 854.4,288 851.05,292" fill="#b0b0b0"/>
    <!-- advanced row -->
    <polygon points="822,341.9 825.7,344.05 822,346.2" fill="#a2a2a2"/>
    <path d="M843 344.8 L849.8 338.3" stroke="#555" stroke-width="1" fill="none"/>
    <polygon points="851.2,337 850.4,340.8 847.4,337.8" fill="#555"/>
    <path d="M852.9 342.3 L846.5 348.5" stroke="#1b86e0" stroke-width="1" fill="none"/>
    <polygon points="845.1,349.8 845.9,346 848.9,349" fill="#1b86e0"/>
    <!-- checkbox tick -->
    <path d="M575.6 368 L578.7 371.3 L584.4 364.3" stroke="#fff" stroke-width="2" fill="none"/>
    <!-- add button plus -->
    <path d="M845.2 399.5 H860 M852.6 392.1 V406.9" stroke="#1e9e3e" stroke-width="2.6" fill="none"/>
  </svg>
</div>
</body>
</html>
